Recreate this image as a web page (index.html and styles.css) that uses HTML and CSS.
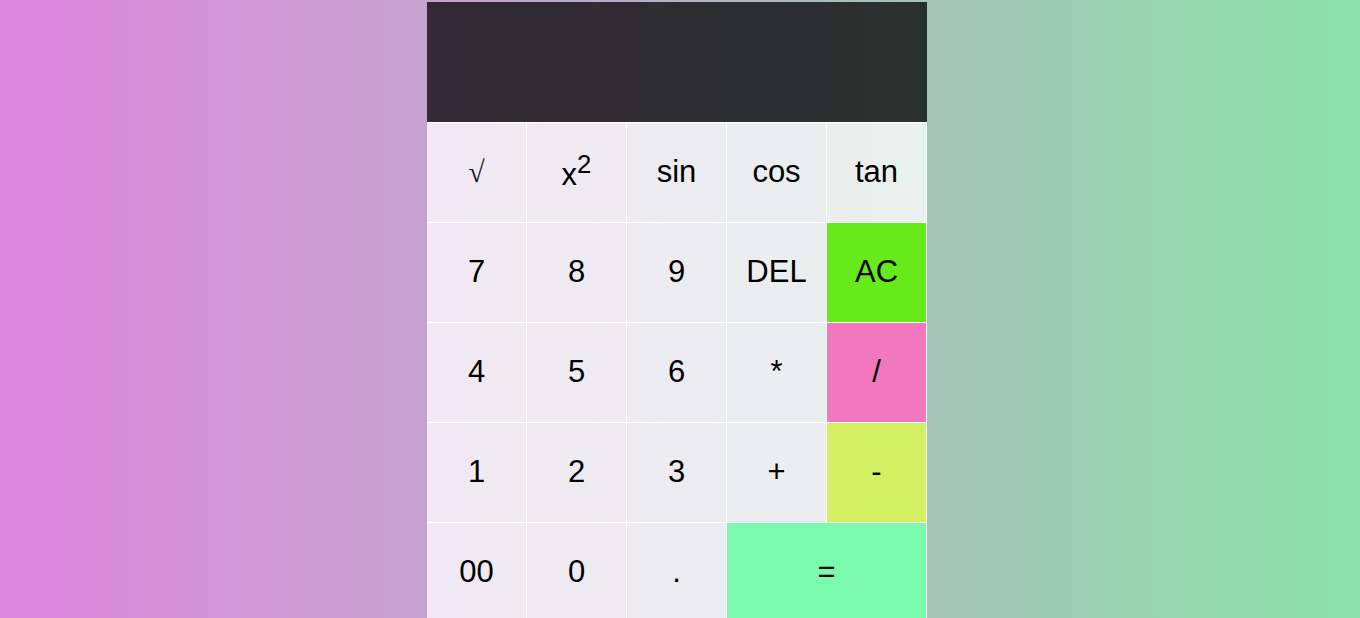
FILE: index.html
```html
<!DOCTYPE html>
<html lang="en">
<head>
<meta charset="utf-8">
<title>Calculator</title>
<link rel="stylesheet" href="styles.css">
</head>
<body>
<main class="calc">
  <div class="display"></div>
  <div class="keys">
    <button class="key"><span class="root">√</span></button>
    <button class="key"><span class="pow">x<sup>2</sup></span></button>
    <button class="key">sin</button>
    <button class="key">cos</button>
    <button class="key">tan</button>

    <button class="key">7</button>
    <button class="key">8</button>
    <button class="key">9</button>
    <button class="key">DEL</button>
    <button class="key key-ac">AC</button>

    <button class="key">4</button>
    <button class="key">5</button>
    <button class="key">6</button>
    <button class="key">*</button>
    <button class="key key-div">/</button>

    <button class="key">1</button>
    <button class="key">2</button>
    <button class="key">3</button>
    <button class="key">+</button>
    <button class="key key-sub">-</button>

    <button class="key">00</button>
    <button class="key">0</button>
    <button class="key">.</button>
    <button class="key key-eq">=</button>
  </div>
</main>
</body>
</html>
```
FILE: styles.css
```css
html, body {
  margin: 0;
  height: 100%;
}
body {
  background: linear-gradient(to right, #df86df, #8ae1a7);
  font-family: "Liberation Sans", Arial, sans-serif;
  overflow: hidden;
  padding-top: 2px;
  box-sizing: border-box;
}
.calc {
  width: 500px;
  margin-left: calc(50% - 253px);
}
.display {
  height: 120px;
  background: rgba(0, 0, 0, 0.75);
}
.keys {
  display: grid;
  grid-template-columns: repeat(5, 100px);
  grid-auto-rows: 100px;
}
.key {
  box-sizing: border-box;
  margin: 0;
  padding: 0 0 2px 0;
  border: 0;
  border-top: 1px solid #fff;
  border-right: 1px solid #fff;
  background: rgba(255, 255, 255, 0.75);
  color: #000;
  font-family: "Liberation Sans", Arial, sans-serif;
  font-size: 31px;
  display: flex;
  align-items: center;
  justify-content: center;
}
.pow {
  padding-top: 6px;
}
.pow sup {
  font-size: 0.83em;
  vertical-align: 0.45em;
  line-height: 0;
}
.root {
  font-family: "Liberation Serif", "Times New Roman", serif;
  font-size: 30px;
  color: #1a1a2a;
}
.key-ac { background: #66ea1c; }
.key-div { background: #f178be; }
.key-sub { background: #d3f062; }
.key-eq { background: #7afaad; grid-column: span 2; }
```
